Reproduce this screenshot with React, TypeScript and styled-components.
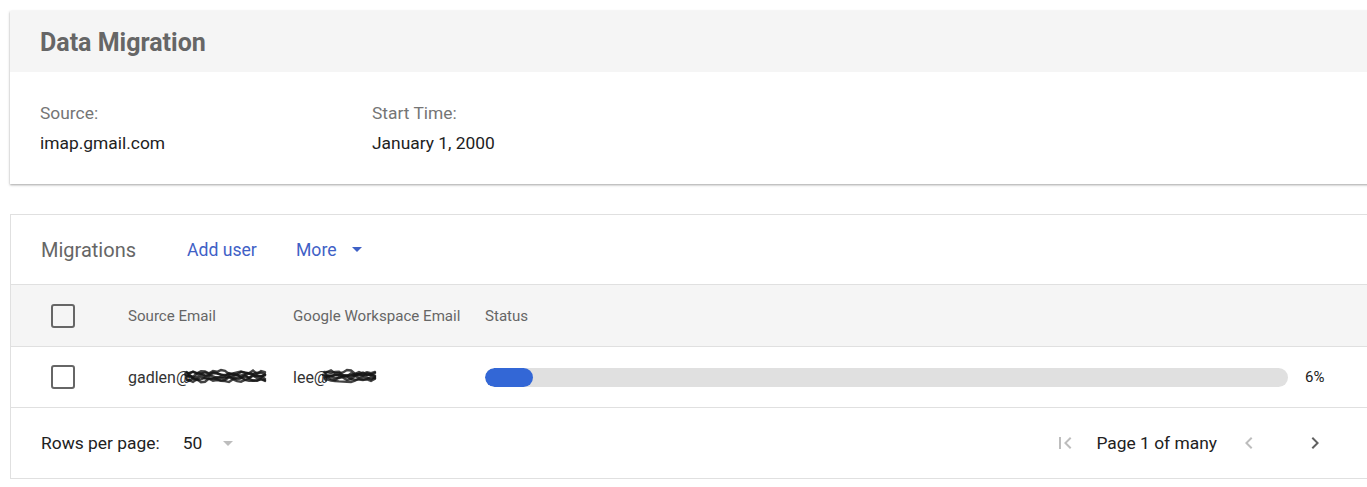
import React from 'react'
import styled, { createGlobalStyle } from 'styled-components'

const GlobalStyle = createGlobalStyle`
  html, body {
    margin: 0;
    padding: 0;
    background: #ffffff;
    overflow: hidden;
  }
  body {
    font-family: Roboto, 'Liberation Sans', Arial, sans-serif;
    color: #212121;
  }
`

const Page = styled.div`
  padding: 11px 0 0 10px;
  display: flex;
  flex-direction: column;
  gap: 30px;
`

const Card = styled.section`
  margin-right: -10px;
  background: #fff;
  box-shadow: 0 1px 2px rgba(0, 0, 0, 0.3), 0 1px 4px rgba(0, 0, 0, 0.08);
`

const CardHeader = styled.div`
  height: 61px;
  background: #f5f5f5;
  display: flex;
  align-items: center;
  padding-left: 30px;
`

const Title = styled.h1`
  margin: 0 0 -1px;
  font-size: 25px;
  font-weight: 700;
  color: #666;
`

const InfoBody = styled.div`
  display: flex;
  padding: 29px 30px 29px;
`

const InfoCol = styled.div`
  width: 332px;
  display: flex;
  flex-direction: column;
  gap: 6px;
`

const InfoLabel = styled.div`
  font-size: 17.4px;
  line-height: 24px;
  color: #757575;
`

const InfoValue = styled.div`
  font-size: 17.4px;
  line-height: 24px;
  color: #212121;
`

const TableCard = styled.section`
  margin-right: -10px;
  border: 1px solid #e0e0e0;
  background: #fff;
`

const Toolbar = styled.div`
  height: 69px;
  display: flex;
  align-items: center;
  padding-left: 30px;
  border-bottom: 1px solid #e0e0e0;
`

const ToolbarTitle = styled.div`
  font-size: 20px;
  color: #666;
  width: 146px;
`

const LinkButton = styled.span<{ $width?: number }>`
  font-size: 17.6px;
  color: #3f61c6;
  display: inline-flex;
  align-items: center;
  gap: 15px;
  width: ${(p) => (p.$width ? `${p.$width}px` : 'auto')};
`

const Row = styled.div<{ $head?: boolean }>`
  display: flex;
  align-items: center;
  height: ${(p) => (p.$head ? 61 : 60)}px;
  padding-left: 40px;
  background: ${(p) => (p.$head ? '#f5f5f5' : '#fff')};
  border-bottom: 1px solid #e0e0e0;
`

const Cell = styled.div<{ $w?: number; $head?: boolean }>`
  width: ${(p) => (p.$w ? `${p.$w}px` : 'auto')};
  flex: ${(p) => (p.$w ? 'none' : '1')};
  font-size: ${(p) => (p.$head ? 15.1 : 16)}px;
  color: ${(p) => (p.$head ? '#666' : '#333')};
  display: flex;
  align-items: center;
  white-space: nowrap;
`

const Checkbox = styled.span`
  width: 20px;
  height: 20px;
  border: 2px solid #666;
  border-radius: 3px;
  box-sizing: content-box;
`

const Bar = styled.div`
  flex: 1;
  height: 19px;
  border-radius: 10px;
  background: #e0e0e0;
  overflow: hidden;
`

const BarFill = styled.div`
  height: 100%;
  background: #3367d6;
  border-radius: 10px;
`

const Percent = styled.div`
  width: 71px;
  padding-left: 17px;
  font-size: 15px;
  color: #212121;
`

const Footer = styled.div`
  height: 70px;
  display: flex;
  align-items: center;
  padding-left: 30px;
`

const FooterText = styled.span`
  font-size: 17.4px;
  color: #212121;
`

const RowsSelect = styled.span`
  display: inline-flex;
  align-items: center;
  gap: 21px;
  margin-left: 23px;
  font-size: 17.4px;
  color: #212121;
`

const Pager = styled.div`
  margin-left: auto;
  display: flex;
  align-items: center;
  margin-right: 49px;
`

const IconBtn = styled.span<{ $gap?: number }>`
  display: inline-flex;
  align-items: center;
  justify-content: center;
  width: 24px;
  height: 24px;
  margin-left: ${(p) => p.$gap ?? 0}px;
`

const Redacted = styled.svg`
  display: block;
  margin-left: -6px;
`

// hand-drawn looking black marker over the hidden part of an address
const Scribble = ({ w }: { w: number }) => {
  const lines: string[] = []
  let seed = w
  const rnd = () => {
    seed = (seed * 9301 + 49297) % 233280
    return seed / 233280
  }
  for (let y = 4; y <= 13; y += 1.4) {
    let d = `M${1 + rnd() * 3} ${y}`
    for (let x = 3; x < w - 3; x += 4) {
      d += ` L${x + 2} ${y + (rnd() - 0.5) * 4}`
    }
    lines.push(d)
  }
  return (
    <Redacted width={w} height={18} viewBox={`0 0 ${w} 18`}>
      {lines.map((d, i) => (
        <path key={i} d={d} stroke="#141414" strokeWidth={2.4} fill="none" opacity={0.8} strokeLinecap="round" />
      ))}
    </Redacted>
  )
}

const Triangle = ({ color }: { color: string }) => (
  <svg width="10" height="5" viewBox="0 0 10 5">
    <path d="M0 0h10L5 5z" fill={color} />
  </svg>
)

const Chevron = ({ dir, color }: { dir: 'left' | 'right'; color: string }) => (
  <svg width="24" height="24" viewBox="0 0 24 24">
    <path
      d={dir === 'left' ? 'M15.41 7.41L14 6l-6 6 6 6 1.41-1.41L10.83 12z' : 'M8.59 16.59L10 18l6-6-6-6-1.41 1.41L13.17 12z'}
      fill={color}
    />
  </svg>
)

const FirstPage = ({ color }: { color: string }) => (
  <svg width="24" height="24" viewBox="0 0 24 24">
    <path d="M18.41 16.59L13.82 12l4.59-4.59L17 6l-6 6 6 6zM6 6h2v12H6z" fill={color} />
  </svg>
)

export default function App() {
  const progress = 6
  return (
    <>
      <GlobalStyle />
      <Page>
        <Card>
          <CardHeader>
            <Title>Data Migration</Title>
          </CardHeader>
          <InfoBody>
            <InfoCol>
              <InfoLabel>Source:</InfoLabel>
              <InfoValue>imap.gmail.com</InfoValue>
            </InfoCol>
            <InfoCol>
              <InfoLabel>Start Time:</InfoLabel>
              <InfoValue>January 1, 2000</InfoValue>
            </InfoCol>
          </InfoBody>
        </Card>

        <TableCard>
          <Toolbar>
            <ToolbarTitle>Migrations</ToolbarTitle>
            <LinkButton $width={109}>Add user</LinkButton>
            <LinkButton>
              More <Triangle color="#3f61c6" />
            </LinkButton>
          </Toolbar>
          <Row $head>
            <Cell $w={77}>
              <Checkbox />
            </Cell>
            <Cell $w={165} $head>
              Source Email
            </Cell>
            <Cell $w={192} $head>
              Google Workspace Email
            </Cell>
            <Cell $head>Status</Cell>
          </Row>
          <Row>
            <Cell $w={77}>
              <Checkbox />
            </Cell>
            <Cell $w={165}>
              gadlen@
              <Scribble w={84} />
            </Cell>
            <Cell $w={192}>
              lee@
              <Scribble w={56} />
            </Cell>
            <Cell>
              <Bar>
                <BarFill style={{ width: `${progress}%` }} />
              </Bar>
              <Percent>{progress}%</Percent>
            </Cell>
          </Row>
          <Footer>
            <FooterText>Rows per page:</FooterText>
            <RowsSelect>
              50 <Triangle color="#bdbdbd" />
            </RowsSelect>
            <Pager>
              <IconBtn>
                <FirstPage color="#bdbdbd" />
              </IconBtn>
              <FooterText style={{ marginLeft: 19 }}>Page 1 of many</FooterText>
              <IconBtn $gap={20}>
                <Chevron dir="left" color="#bdbdbd" />
              </IconBtn>
              <IconBtn $gap={42}>
                <Chevron dir="right" color="#616161" />
              </IconBtn>
            </Pager>
          </Footer>
        </TableCard>
      </Page>
    </>
  )
}
